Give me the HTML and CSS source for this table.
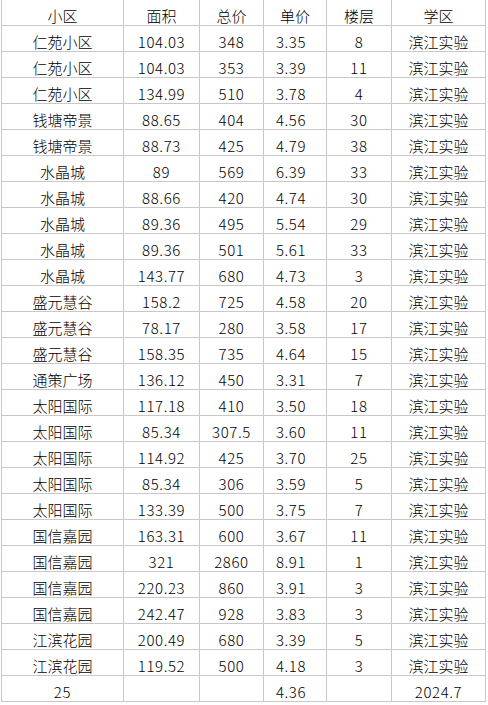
FILE: index.html
```html
<!DOCTYPE html>
<html lang="zh-CN">
<head>
<meta charset="utf-8">
<title>小区房价</title>
<link rel="stylesheet" href="styles.css">
</head>
<body>
<div class="sheet">
  <div class="c h">小区</div><div class="c h">面积</div><div class="c h">总价</div><div class="c h">单价</div><div class="c h">楼层</div><div class="c h">学区</div>

  <div class="c t">仁苑小区</div><div class="c n">104.03</div><div class="c n">348</div><div class="c n u">3.35</div><div class="c n">8</div><div class="c t">滨江实验</div>
  <div class="c t">仁苑小区</div><div class="c n">104.03</div><div class="c n">353</div><div class="c n u">3.39</div><div class="c n">11</div><div class="c t">滨江实验</div>
  <div class="c t">仁苑小区</div><div class="c n">134.99</div><div class="c n">510</div><div class="c n u">3.78</div><div class="c n">4</div><div class="c t">滨江实验</div>
  <div class="c t">钱塘帝景</div><div class="c n">88.65</div><div class="c n">404</div><div class="c n u">4.56</div><div class="c n">30</div><div class="c t">滨江实验</div>
  <div class="c t">钱塘帝景</div><div class="c n">88.73</div><div class="c n">425</div><div class="c n u">4.79</div><div class="c n">38</div><div class="c t">滨江实验</div>
  <div class="c t">水晶城</div><div class="c n">89</div><div class="c n">569</div><div class="c n u">6.39</div><div class="c n">33</div><div class="c t">滨江实验</div>
  <div class="c t">水晶城</div><div class="c n">88.66</div><div class="c n">420</div><div class="c n u">4.74</div><div class="c n">30</div><div class="c t">滨江实验</div>
  <div class="c t">水晶城</div><div class="c n">89.36</div><div class="c n">495</div><div class="c n u">5.54</div><div class="c n">29</div><div class="c t">滨江实验</div>
  <div class="c t">水晶城</div><div class="c n">89.36</div><div class="c n">501</div><div class="c n u">5.61</div><div class="c n">33</div><div class="c t">滨江实验</div>
  <div class="c t">水晶城</div><div class="c n">143.77</div><div class="c n">680</div><div class="c n u">4.73</div><div class="c n">3</div><div class="c t">滨江实验</div>
  <div class="c t">盛元慧谷</div><div class="c n">158.2</div><div class="c n">725</div><div class="c n u">4.58</div><div class="c n">20</div><div class="c t">滨江实验</div>
  <div class="c t">盛元慧谷</div><div class="c n">78.17</div><div class="c n">280</div><div class="c n u">3.58</div><div class="c n">17</div><div class="c t">滨江实验</div>
  <div class="c t">盛元慧谷</div><div class="c n">158.35</div><div class="c n">735</div><div class="c n u">4.64</div><div class="c n">15</div><div class="c t">滨江实验</div>
  <div class="c t">通策广场</div><div class="c n">136.12</div><div class="c n">450</div><div class="c n u">3.31</div><div class="c n">7</div><div class="c t">滨江实验</div>
  <div class="c t">太阳国际</div><div class="c n">117.18</div><div class="c n">410</div><div class="c n u">3.50</div><div class="c n">18</div><div class="c t">滨江实验</div>
  <div class="c t">太阳国际</div><div class="c n">85.34</div><div class="c n">307.5</div><div class="c n u">3.60</div><div class="c n">11</div><div class="c t">滨江实验</div>
  <div class="c t">太阳国际</div><div class="c n">114.92</div><div class="c n">425</div><div class="c n u">3.70</div><div class="c n">25</div><div class="c t">滨江实验</div>
  <div class="c t">太阳国际</div><div class="c n">85.34</div><div class="c n">306</div><div class="c n u">3.59</div><div class="c n">5</div><div class="c t">滨江实验</div>
  <div class="c t">太阳国际</div><div class="c n">133.39</div><div class="c n">500</div><div class="c n u">3.75</div><div class="c n">7</div><div class="c t">滨江实验</div>
  <div class="c t">国信嘉园</div><div class="c n">163.31</div><div class="c n">600</div><div class="c n u">3.67</div><div class="c n">11</div><div class="c t">滨江实验</div>
  <div class="c t">国信嘉园</div><div class="c n">321</div><div class="c n">2860</div><div class="c n u">8.91</div><div class="c n">1</div><div class="c t">滨江实验</div>
  <div class="c t">国信嘉园</div><div class="c n">220.23</div><div class="c n">860</div><div class="c n u">3.91</div><div class="c n">3</div><div class="c t">滨江实验</div>
  <div class="c t">国信嘉园</div><div class="c n">242.47</div><div class="c n">928</div><div class="c n u">3.83</div><div class="c n">3</div><div class="c t">滨江实验</div>
  <div class="c t">江滨花园</div><div class="c n">200.49</div><div class="c n">680</div><div class="c n u">3.39</div><div class="c n">5</div><div class="c t">滨江实验</div>
  <div class="c t">江滨花园</div><div class="c n">119.52</div><div class="c n">500</div><div class="c n u">4.18</div><div class="c n">3</div><div class="c t">滨江实验</div>

  <div class="c n">25</div><div class="c n"></div><div class="c n"></div><div class="c n u">4.36</div><div class="c n"></div><div class="c n">2024.7</div>
</div>
</body>
</html>
```

FILE: styles.css
```css
html, body {
  margin: 0;
  padding: 0;
  background: #ffffff;
}

.sheet {
  display: grid;
  grid-template-columns: 121px 75px 63px 62px 64px 93px;
  grid-auto-rows: 25px;
  gap: 1px;
  padding: 1px;
  width: max-content;
  margin: -1px 0 0 1px;
  background: #c8c8c8;
}

.c {
  background: #ffffff;
  color: #000000;
  text-align: center;
  white-space: nowrap;
  overflow: hidden;
  height: 25px;
  box-sizing: border-box;
  line-height: 25px;
  padding-top: 3px;
  font-family: "Noto Sans CJK SC", sans-serif;
  font-size: 15px;
  font-weight: 300;
}

.n {
  letter-spacing: 0.6px;
}

.u {
  padding-right: 8px;
}
```
